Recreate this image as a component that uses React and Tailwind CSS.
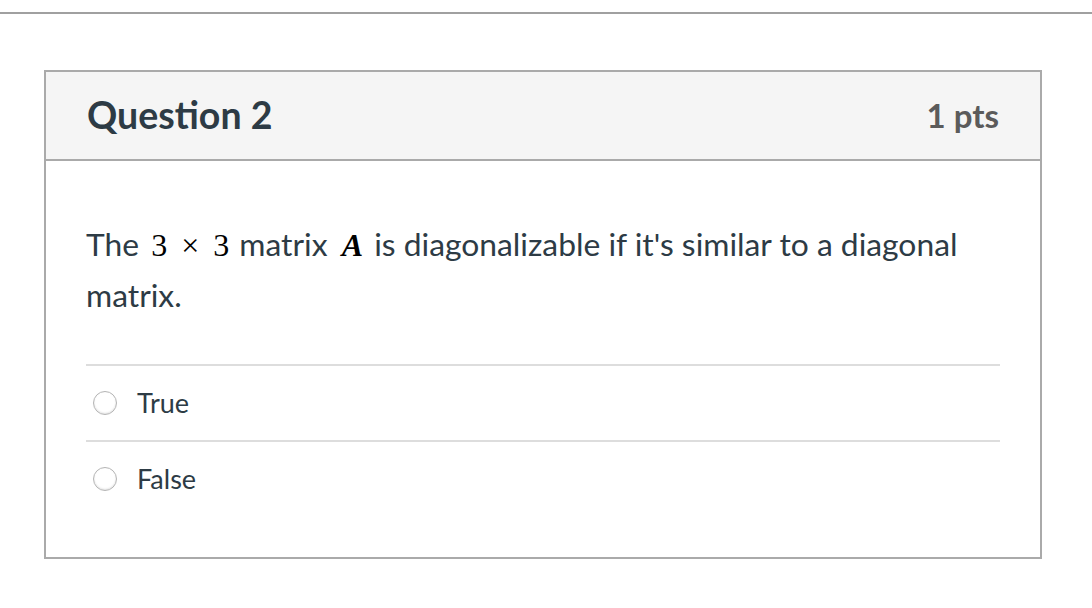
import React from "react";

const answers = ["True", "False"];

const Radio = () => (
  <span className="inline-block w-[24px] h-[24px] rounded-full border border-[#b4b4b4] bg-white shadow-[inset_0_-1px_2px_rgba(0,0,0,0.12)] shrink-0" />
);

// KaTeX-ish inline math
const Tex = ({ children, italic, className = "" }) => (
  <span
    className={`font-['Liberation_Serif',serif] text-black text-[32px] ${
      italic ? "italic font-bold" : ""
    } ${className}`}
  >
    {children}
  </span>
);

export default function App() {
  return (
    <div className="min-h-[608px] bg-white pt-[12px] font-['Lato','Liberation_Sans',sans-serif] text-[#2d3b45]">
      <div className="border-t-2 border-[#a0a0a0]" />
      <div className="mt-[56px] ml-[44px] w-[998px] border-2 border-[#aaaaaa]">
        <div className="h-[89px] bg-[#f5f5f5] border-b-2 border-[#aaaaaa] px-[41px] flex items-center justify-between">
          <h2 className="text-[37.5px] font-bold text-[#2d3b45]">Question 2</h2>
          <span className="text-[33px] font-bold text-[#5b5b5b]">1 pts</span>
        </div>
        <div className="px-[40px] pt-[58px] pb-[41px]">
          <p className="text-[31.8px] leading-[50px]">
            The <Tex className="ml-[4px]">3</Tex>
            <Tex className="mx-[14px]">×</Tex>
            <Tex className="mr-[2px]">3</Tex> matrix{" "}
            <Tex italic className="ml-[6px] mr-[3px]">A</Tex> is diagonalizable
            if it's similar to a diagonal matrix.
          </p>
          <div className="mt-[44px]">
            {answers.map((a) => (
              <div
                key={a}
                className="border-t-2 border-[#dddddd] h-[76px] flex items-center pl-[7px] gap-[20px]"
              >
                <Radio />
                <span className="text-[27px]">{a}</span>
              </div>
            ))}
          </div>
        </div>
      </div>
    </div>
  );
}
